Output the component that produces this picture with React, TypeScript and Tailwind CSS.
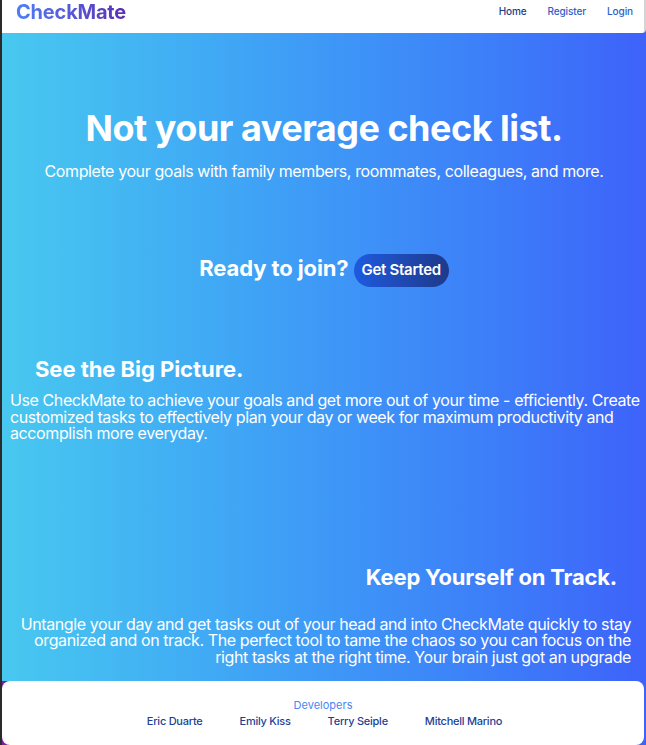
import React from "react";

export default function App() {
  const font = { fontFamily: "Inter, 'Noto Sans', sans-serif" };
  return (
    <div
      style={font}
      className="min-h-[745px] w-full bg-gradient-to-r from-[#7b1fa2] to-[#3d63f9] border-l-2 border-[#2a2a2a] flex flex-col"
    >
      <header className="h-[33px] bg-white rounded-br-[4px] border-r-2 border-[#d4d4d4] flex items-center justify-between pl-[14px] pr-[11px]">
        <span className="text-[20px] font-bold leading-none bg-gradient-to-r from-[#4a7ff6] to-[#5a2db5] bg-clip-text text-transparent -mt-[10px] tracking-[-0.2px]">
          CheckMate
        </span>
        <nav className="flex items-center gap-[21px] text-[10px] font-medium -mt-[10px] tracking-[-0.1px]">
          <a className="text-[#1e3a8a]">Home</a>
          <a className="text-[#2d5ec8]">Register</a>
          <a className="text-[#2d5ec8]">Login</a>
        </nav>
      </header>
      <main className="bg-gradient-to-r from-[#48c8ef] to-[#3e62fa] text-white pt-[75px] h-[648px]">
        <h1 className="text-[36px] leading-[40px] font-bold text-center tracking-[-0.5px]">
          Not your average check list.
        </h1>
        <p className="mt-[11px] text-[16px] leading-[24px] text-center tracking-[-0.4px]">
          Complete your goals with family members, roommates, colleagues, and more.
        </p>
        <div className="mt-[67px] flex items-center justify-center gap-[5px]">
          <span className="text-[22px] leading-[28px] font-bold tracking-[-0.1px] -mt-[2px]">Ready to join?</span>
          <button className="h-[33px] px-[8px] rounded-full bg-gradient-to-r from-[#1d5ae0] to-[#1e3a8a] text-[15px] font-semibold tracking-[-0.3px] mt-[4px]">
            Get Started
          </button>
        </div>
        <h2 className="mt-[68px] pl-[33px] text-[22px] leading-[28px] font-bold tracking-[-0.05px]">
          See the Big Picture.
        </h2>
        <p className="mt-[9px] pl-[8px] pr-[2px] text-[16px] leading-[16.5px] tracking-[-0.4px]">
          Use CheckMate to achieve your goals and get more out of your time - efficiently. Create customized tasks to effectively plan your day or week for maximum productivity and accomplish more everyday.
        </p>
        <h2 className="mt-[121px] pr-[29px] text-right text-[22px] leading-[28px] font-bold tracking-[-0.2px]">
          Keep Yourself on Track.
        </h2>
        <p className="mt-[25px] pl-[16px] pr-[15px] text-right text-[16px] leading-[16.5px] tracking-[-0.4px]">
          Untangle your day and get tasks out of your head and into CheckMate quickly to stay organized and on track. The perfect tool to tame the chaos so you can focus on the right tasks at the right time. Your brain just got an upgrade
        </p>
      </main>
      <footer className="flex-1 bg-white rounded-[8px] mr-[2px] pt-[16px] pb-[16px] flex flex-col items-center">
        <div className="text-[11px] leading-[16px] text-[#4a86f0]">Developers</div>
        <div className="flex gap-[37px] text-[11px] leading-[16px] font-medium text-[#1e3f96] ml-[3px] tracking-[-0.25px]">
          <span>Eric Duarte</span>
          <span>Emily Kiss</span>
          <span>Terry Seiple</span>
          <span>Mitchell Marino</span>
        </div>
      </footer>
    </div>
  );
}
